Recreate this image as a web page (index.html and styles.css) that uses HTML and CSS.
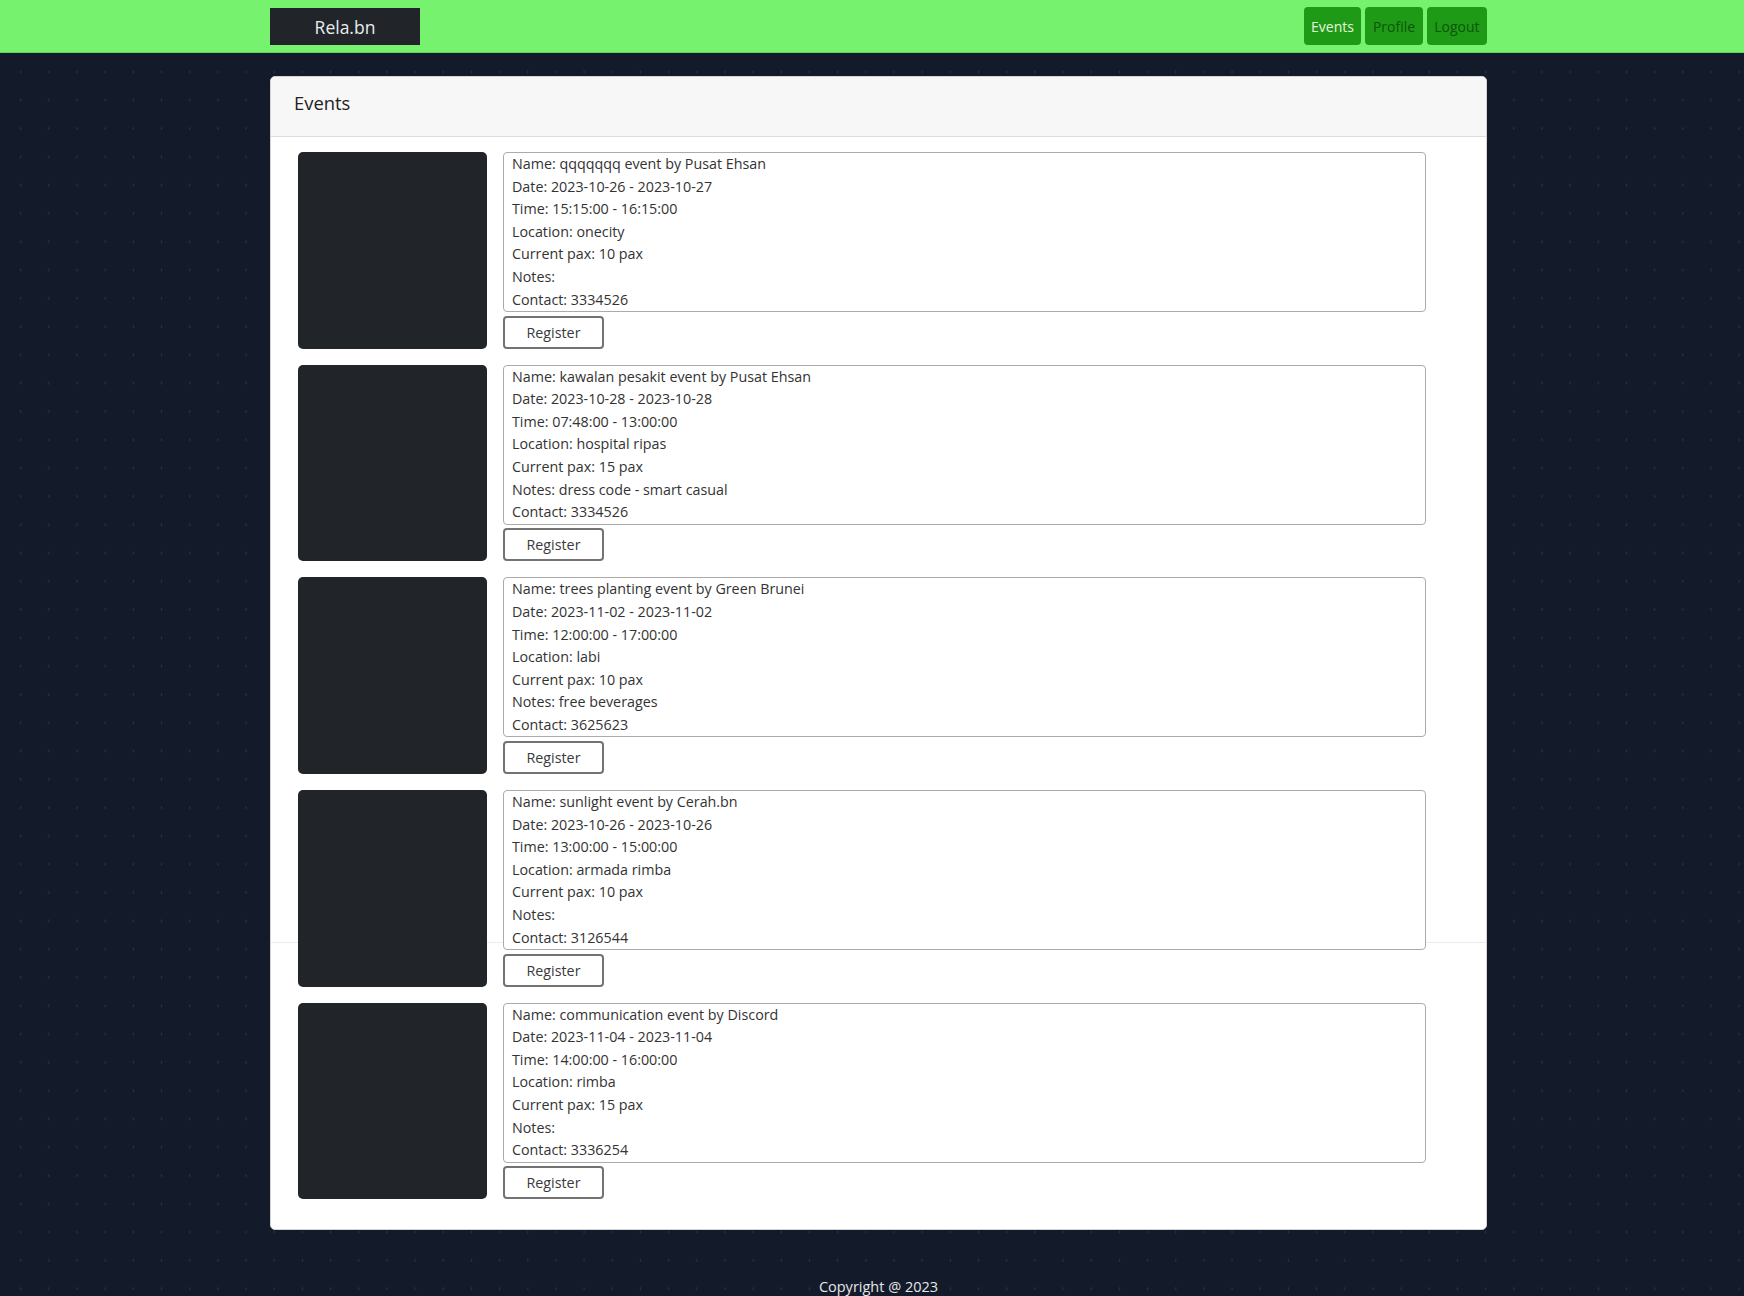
FILE: index.html
```html
<!DOCTYPE html>
<html lang="en">
<head>
<meta charset="utf-8">
<title>Rela.bn - Events</title>
<link rel="stylesheet" href="styles.css">
</head>
<body>
<header class="navbar">
  <div class="wrap nav-inner">
    <a class="brand" href="#">Rela.bn</a>
    <nav class="nav-links">
      <a class="nav-btn active" href="#">Events</a>
      <a class="nav-btn" href="#">Profile</a>
      <a class="nav-btn" href="#">Logout</a>
    </nav>
  </div>
</header>

<main class="wrap">
  <section class="card">
    <div class="card-header">Events</div>
    <div class="card-body">
      <div class="event">
        <div class="event-img"></div>
        <div class="event-main">
          <div class="info">
            <div>Name: qqqqqqq event by Pusat Ehsan</div>
            <div>Date: 2023-10-26 - 2023-10-27</div>
            <div>Time: 15:15:00 - 16:15:00</div>
            <div>Location: onecity</div>
            <div>Current pax: 10 pax</div>
            <div>Notes: </div>
            <div>Contact: 3334526</div>
          </div>
          <button class="btn-register" type="button">Register</button>
        </div>
      </div>

      <div class="event">
        <div class="event-img"></div>
        <div class="event-main">
          <div class="info">
            <div>Name: kawalan pesakit event by Pusat Ehsan</div>
            <div>Date: 2023-10-28 - 2023-10-28</div>
            <div>Time: 07:48:00 - 13:00:00</div>
            <div>Location: hospital ripas</div>
            <div>Current pax: 15 pax</div>
            <div>Notes: dress code - smart casual</div>
            <div>Contact: 3334526</div>
          </div>
          <button class="btn-register" type="button">Register</button>
        </div>
      </div>

      <div class="event">
        <div class="event-img"></div>
        <div class="event-main">
          <div class="info">
            <div>Name: trees planting event by Green Brunei</div>
            <div>Date: 2023-11-02 - 2023-11-02</div>
            <div>Time: 12:00:00 - 17:00:00</div>
            <div>Location: labi</div>
            <div>Current pax: 10 pax</div>
            <div>Notes: free beverages</div>
            <div>Contact: 3625623</div>
          </div>
          <button class="btn-register" type="button">Register</button>
        </div>
      </div>

      <div class="event">
        <div class="event-img"></div>
        <div class="event-main">
          <div class="info">
            <div>Name: sunlight event by Cerah.bn</div>
            <div>Date: 2023-10-26 - 2023-10-26</div>
            <div>Time: 13:00:00 - 15:00:00</div>
            <div>Location: armada rimba</div>
            <div>Current pax: 10 pax</div>
            <div>Notes: </div>
            <div>Contact: 3126544</div>
          </div>
          <button class="btn-register" type="button">Register</button>
        </div>
      </div>

      <div class="event">
        <div class="event-img"></div>
        <div class="event-main">
          <div class="info">
            <div>Name: communication event by Discord</div>
            <div>Date: 2023-11-04 - 2023-11-04</div>
            <div>Time: 14:00:00 - 16:00:00</div>
            <div>Location: rimba</div>
            <div>Current pax: 15 pax</div>
            <div>Notes: </div>
            <div>Contact: 3336254</div>
          </div>
          <button class="btn-register" type="button">Register</button>
        </div>
      </div>
    </div>
  </section>
</main>

<footer class="wrap footer">Copyright @ 2023</footer>
</body>
</html>
```

FILE: styles.css
```css
* {
  box-sizing: border-box;
}

html, body {
  margin: 0;
  padding: 0;
}

body {
  font-family: "Open Sans", "Noto Sans", "Liberation Sans", sans-serif;
  font-size: 14.3px;
  line-height: 1.5;
  color: #333;
  background-color: #131a2a;
  background-image: radial-gradient(ellipse 1.1px 2px at center, #27304a 60%, rgba(39, 48, 74, 0) 100%);
  background-size: 28.18px 28.3px;
  background-position: 6.6px 1.2px;
  min-height: 1296px;
}

.wrap {
  width: 1217px;
  margin-left: 270px;
}

/* Navbar */
.navbar {
  background: #77f26e;
  border-bottom: 1px solid #62d85a;
}

.nav-inner {
  display: flex;
  align-items: center;
  justify-content: space-between;
  height: 52px;
}

.brand {
  display: flex;
  align-items: center;
  justify-content: center;
  width: 150px;
  height: 37px;
  padding-top: 3px;
  background: #212529;
  color: #e9ecef;
  font-size: 17.5px;
  text-decoration: none;
}

.nav-links {
  display: flex;
  gap: 4px;
}

.nav-btn {
  display: flex;
  align-items: center;
  height: 37.5px;
  padding: 0 7.5px;
  border-radius: 4px;
  background: #1f9a17;
  color: #0c560a;
  font-size: 14px;
  text-decoration: none;
}

.nav-btn.active {
  color: #e4f7de;
}

/* Card */
.card {
  margin-top: 22.5px;
  background: #fff;
  border: 1px solid #d4d4d4;
  border-radius: 5px;
  overflow: hidden;
}

.card-header {
  background: #f7f7f7;
  border-bottom: 1px solid #dddddd;
  padding: 14.5px 23px 21px;
  font-size: 18.4px;
  font-weight: 500;
  line-height: 24px;
  color: #222;
}

.card-body {
  padding: 15px 0 14px 27px;
  background-image: linear-gradient(#ececec, #ececec);
  background-size: 100% 1px;
  background-position: 0 805px;
  background-repeat: no-repeat;
}

.event {
  display: flex;
  gap: 16px;
  margin-bottom: 16px;
}

.event-img {
  width: 189px;
  flex: none;
  background: #212529;
  border-radius: 5px;
}

.event-main {
  width: 923px;
  display: flex;
  flex-direction: column;
  align-items: flex-start;
  gap: 3.5px;
}

.info {
  width: 100%;
  border: 1px solid #ababab;
  border-radius: 4px;
  padding: 0 8px;
  line-height: 22.6px;
  color: #333;
  background: #fff;
}

.btn-register {
  width: 101px;
  height: 33px;
  padding: 0;
  border: 2px solid #737373;
  border-radius: 4px;
  background: #fff;
  color: #3a3a3a;
  font-family: inherit;
  font-size: 14.3px;
}

/* Footer */
.footer {
  margin-top: 46px;
  text-align: center;
  color: #e6e6e6;
  font-size: 14.5px;
  line-height: 22px;
}
```
